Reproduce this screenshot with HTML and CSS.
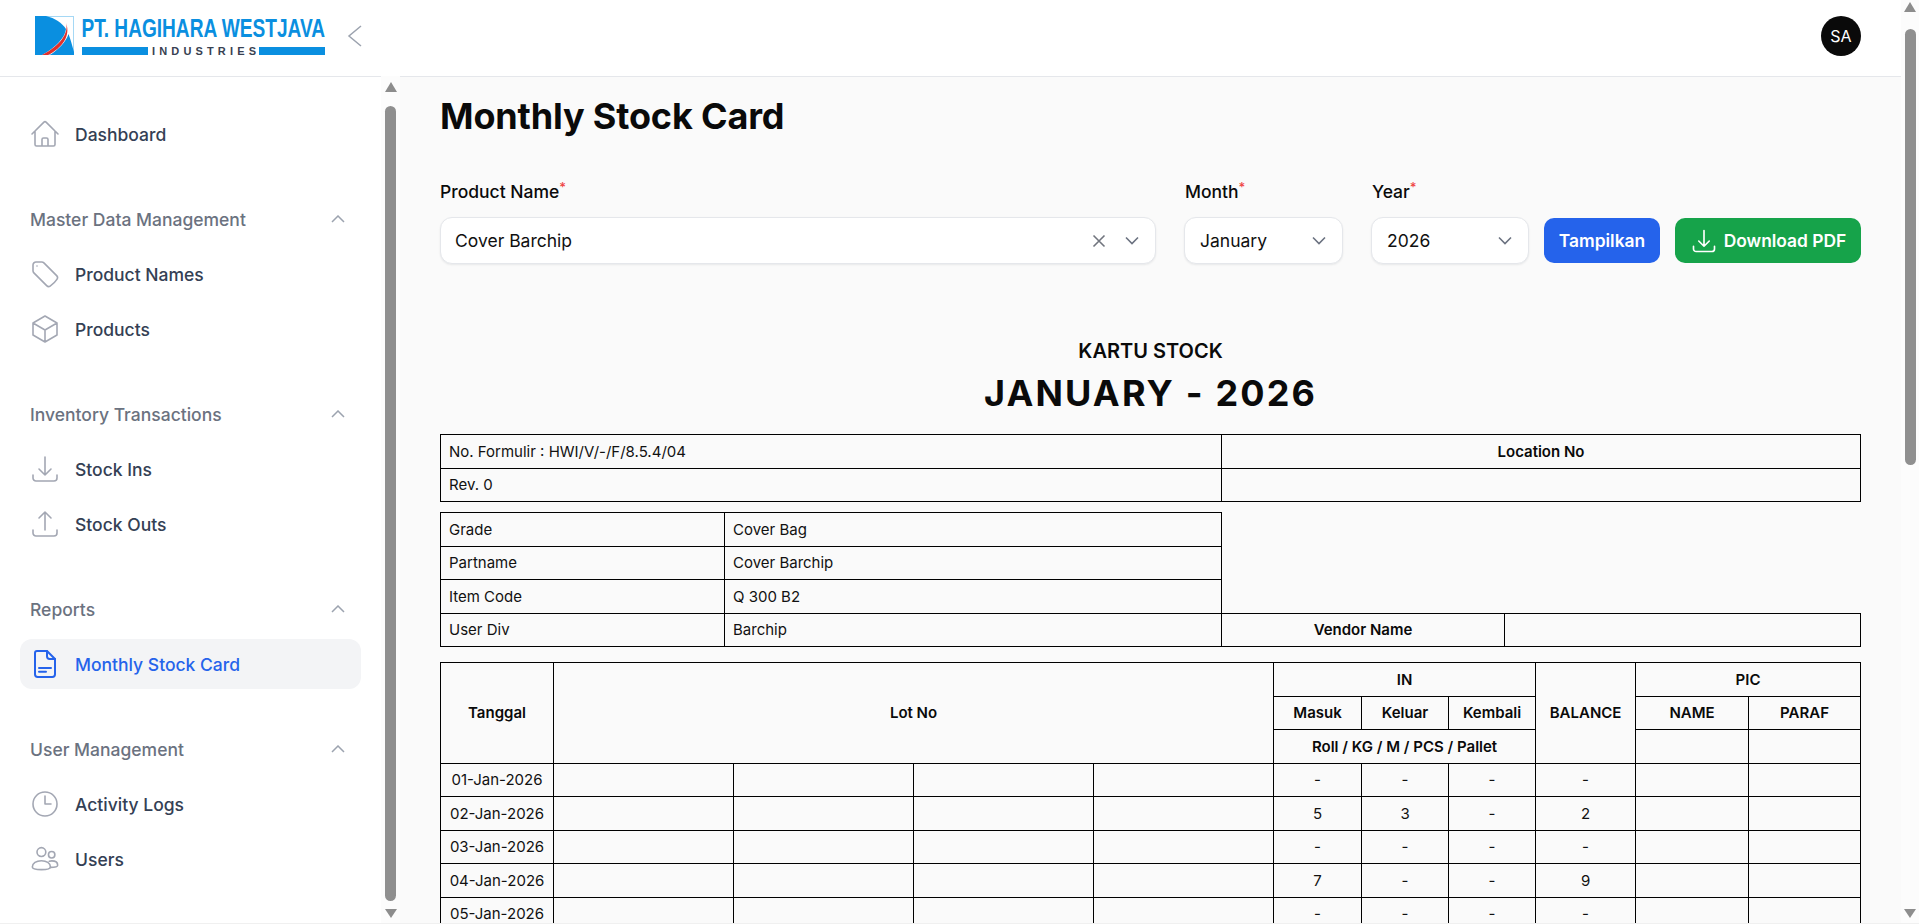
FILE: index.html
```html
<!DOCTYPE html>
<html lang="en">
<head>
<meta charset="utf-8">
<title>Monthly Stock Card</title>
<link rel="stylesheet" href="styles.css">
</head>
<body>
<div class="app">
  <div class="page">
    <header class="topbar">
      <svg class="logo" viewBox="0 0 291 40" width="291" height="40" role="img" aria-label="PT. Hagihara Westjava Industries">
        <rect class="logo-frame" x="0.5" y="0.5" width="38" height="38"/>
        <path class="logo-blue" d="M0 0H11C20 2 27 7 31 13C30 22 20 32 7 39H0Z"/>
        <path class="logo-red" d="M31 7C34 17 25 30 7 39H13C27 32 36 20 31 7Z"/>
        <path class="logo-blue" d="M33.5 18C31 26 24 33 15 39H39V36C37 29 35.500 23 33.500 18Z"/>
        <text class="logo-name" x="46.500" y="21" textLength="243.500" lengthAdjust="spacingAndGlyphs">PT. HAGIHARA WESTJAVA</text>
        <rect class="logo-blue" x="47" y="31" width="66" height="8"/>
        <text class="logo-sub" x="117" y="39" textLength="104">INDUSTRIES</text>
        <rect class="logo-blue" x="224" y="31" width="66" height="8"/>
      </svg>
      <svg class="collapse" viewBox="0 0 24 24" width="24" height="24"><path d="M18 2L6 12L18 22"/></svg>
      <div class="avatar">SA</div>
    </header>
    <div class="workspace">
      <aside class="sidebar">
        <nav class="nav">
          <a class="item single"><svg class="ico" viewBox="0 0 24 24"><path d="M2.250 12l8.954-8.955c.44-.439 1.152-.439 1.591 0L21.750 12M4.500 9.750v10.125c0 .621.504 1.125 1.125 1.125H9.750v-4.875c0-.621.504-1.125 1.125-1.125h2.250c.621 0 1.125.504 1.125 1.125V21h4.125c.621 0 1.125-.504 1.125-1.125V9.750M8.250 21h8.250"/></svg>Dashboard</a>

          <section class="group">
            <div class="group-title">Master Data Management<svg class="caret" viewBox="0 0 14 8"><path d="M1 7L7 1L13 7"/></svg></div>
            <a class="item"><svg class="ico" viewBox="0 0 24 24"><path d="M9.568 3H5.250A2.250 2.250 0 003 5.250v4.318c0 .597.237 1.170.659 1.591l9.581 9.581c.699.699 1.780.872 2.607.33a18.095 18.095 0 005.223-5.223c.542-.827.369-1.908-.33-2.607L11.160 3.660A2.250 2.250 0 009.568 3z"/><path d="M6 6h.008v.008H6V6z"/></svg>Product Names</a>
            <a class="item"><svg class="ico" viewBox="0 0 24 24"><path d="M21 7.500l-9-5.250L3 7.500m18 0l-9 5.250m9-5.250v9l-9 5.250M3 7.500l9 5.250M3 7.500v9l9 5.250m0-9v9"/></svg>Products</a>
          </section>

          <section class="group">
            <div class="group-title">Inventory Transactions<svg class="caret" viewBox="0 0 14 8"><path d="M1 7L7 1L13 7"/></svg></div>
            <a class="item"><svg class="ico" viewBox="0 0 24 24"><path d="M3 16.500v2.250A2.250 2.250 0 005.250 21h13.500A2.250 2.250 0 0021 18.750V16.500M16.500 12L12 16.500m0 0L7.500 12m4.500 4.500V3"/></svg>Stock Ins</a>
            <a class="item"><svg class="ico" viewBox="0 0 24 24"><path d="M3 16.500v2.250A2.250 2.250 0 005.250 21h13.500A2.250 2.250 0 0021 18.750V16.500m-13.500-9L12 3m0 0l4.500 4.500M12 3v13.500"/></svg>Stock Outs</a>
          </section>

          <section class="group">
            <div class="group-title">Reports<svg class="caret" viewBox="0 0 14 8"><path d="M1 7L7 1L13 7"/></svg></div>
            <a class="item active"><svg class="ico" viewBox="0 0 24 24"><path d="M6 2.250h7.500l6 6v11.500a2 2 0 0 1-2 2H6.500a2 2 0 0 1-2-2V3.750a1.500 1.500 0 0 1 1.500-1.500z"/><path d="M13.500 2.250v4a2 2 0 0 0 2 2h4M7.500 15h9M7.500 17.800h5.250"/></svg>Monthly Stock Card</a>
          </section>

          <section class="group">
            <div class="group-title">User Management<svg class="caret" viewBox="0 0 14 8"><path d="M1 7L7 1L13 7"/></svg></div>
            <a class="item"><svg class="ico" viewBox="0 0 24 24"><path d="M12 6v6h4.500m4.500 0a9 9 0 11-18 0 9 9 0 0118 0z"/></svg>Activity Logs</a>
            <a class="item"><svg class="ico" viewBox="0 0 24 24"><circle cx="9.300" cy="6.800" r="3.300"/><circle cx="17" cy="8.800" r="2.400"/><path d="M2.500 18c0-2.900 3-4.700 6.800-4.700s6.800 1.800 6.800 4.700c0 1.300-2 2-6.800 2s-6.800-.7-6.800-2z"/><path d="M15.200 13.700c.6-.2 1.200-.3 1.900-.3 2.600 0 4.400 1.300 4.400 3.200 0 1.300-1.500 1.700-5.500 1.700"/></svg>Users</a>
          </section>
        </nav>
        <div class="vbar vbar-side">
          <span class="arrow-up"></span>
          <span class="thumb thumb-side"></span>
          <span class="arrow-down"></span>
        </div>
      </aside>

      <main class="main">
        <h1 class="title">Monthly Stock Card</h1>

        <form class="filters">
          <div class="field field-product">
            <label class="label">Product Name<sup class="req">*</sup></label>
            <div class="select">
              <span class="select-value">Cover Barchip</span>
              <svg class="clear" viewBox="0 0 14 14"><path d="M1.500 1.500L12.500 12.500M12.500 1.500L1.500 12.500"/></svg>
              <svg class="chev" viewBox="0 0 14 9"><path d="M1 1.500L7 7.500L13 1.500"/></svg>
            </div>
          </div>
          <div class="field field-month">
            <label class="label">Month<sup class="req">*</sup></label>
            <div class="select">
              <span class="select-value">January</span>
              <svg class="chev" viewBox="0 0 14 9"><path d="M1 1.500L7 7.500L13 1.500"/></svg>
            </div>
          </div>
          <div class="field field-year">
            <label class="label">Year<sup class="req">*</sup></label>
            <div class="select">
              <span class="select-value">2026</span>
              <svg class="chev" viewBox="0 0 14 9"><path d="M1 1.500L7 7.500L13 1.500"/></svg>
            </div>
          </div>
          <button type="button" class="btn btn-blue">Tampilkan</button>
          <button type="button" class="btn btn-green"><svg class="btn-ico" viewBox="0 0 24 24"><path d="M3 16.500v2.250A2.250 2.250 0 005.250 21h13.500A2.250 2.250 0 0021 18.750V16.500M16.500 12L12 16.500m0 0L7.500 12m4.500 4.500V3"/></svg>Download PDF</button>
        </form>

        <section class="report">
          <h2 class="report-kicker">KARTU STOCK</h2>
          <h3 class="report-period">JANUARY - 2026</h3>

          <table class="sheet sheet-a">
            <colgroup><col class="a1"><col class="a2"></colgroup>
            <tr><td>No. Formulir : HWI/V/-/F/8.5.4/04</td><th>Location No</th></tr>
            <tr><td>Rev. 0</td><td></td></tr>
          </table>

          <table class="sheet sheet-b">
            <colgroup><col class="b1"><col class="b2"><col class="b3"><col class="b4"></colgroup>
            <tr><td>Grade</td><td>Cover Bag</td><td class="blank" colspan="2" rowspan="3"></td></tr>
            <tr><td>Partname</td><td>Cover Barchip</td></tr>
            <tr><td>Item Code</td><td>Q 300 B2</td></tr>
            <tr><td>User Div</td><td>Barchip</td><th>Vendor Name</th><td></td></tr>
          </table>

          <table class="sheet sheet-c">
            <colgroup><col class="c1"><col class="c2"><col class="c2"><col class="c2"><col class="c2"><col class="c3"><col class="c4"><col class="c5"><col class="c6"><col class="c7"><col class="c8"></colgroup>
            <tr><th rowspan="3">Tanggal</th><th rowspan="3" colspan="4">Lot No</th><th colspan="3">IN</th><th rowspan="3">BALANCE</th><th colspan="2">PIC</th></tr>
            <tr><th>Masuk</th><th>Keluar</th><th>Kembali</th><th>NAME</th><th>PARAF</th></tr>
            <tr><th colspan="3">Roll / KG / M / PCS / Pallet</th><td></td><td></td></tr>
            <tr class="data"><td>01-Jan-2026</td><td></td><td></td><td></td><td></td><td>-</td><td>-</td><td>-</td><td>-</td><td></td><td></td></tr>
            <tr class="data"><td>02-Jan-2026</td><td></td><td></td><td></td><td></td><td>5</td><td>3</td><td>-</td><td>2</td><td></td><td></td></tr>
            <tr class="data"><td>03-Jan-2026</td><td></td><td></td><td></td><td></td><td>-</td><td>-</td><td>-</td><td>-</td><td></td><td></td></tr>
            <tr class="data"><td>04-Jan-2026</td><td></td><td></td><td></td><td></td><td>7</td><td>-</td><td>-</td><td>9</td><td></td><td></td></tr>
            <tr class="data"><td>05-Jan-2026</td><td></td><td></td><td></td><td></td><td>-</td><td>-</td><td>-</td><td>-</td><td></td><td></td></tr>
          </table>
        </section>
      </main>
    </div>
  </div>
  <div class="vbar vbar-page">
    <span class="arrow-up"></span>
    <span class="thumb thumb-page"></span>
    <span class="arrow-down"></span>
  </div>
</div>
</body>
</html>
```
FILE: styles.css
```css
* { box-sizing: border-box; }

html, body {
  margin: 0;
  height: 924px;
  overflow: hidden;
}

body {
  font-family: Inter, "Liberation Sans", sans-serif;
  font-size: 17.500px;
  color: #101828;
  background: #fafafa;
}

.app {
  display: flex;
  height: 924px;
  border-bottom: 1px solid #f0f0f0;
}

.page {
  flex: 1;
  min-width: 0;
  display: flex;
  flex-direction: column;
}

/* Top bar */
.topbar {
  height: 77px;
  flex: none;
  display: flex;
  align-items: center;
  padding: 0 40px 4px 35px;
  background: #fff;
  border-bottom: 1px solid #e5e7eb;
}

.logo { flex: none; display: block; overflow: visible; }
.logo-frame { fill: #fff; stroke: #a5d8f5; stroke-width: 1; }
.logo-blue { fill: #0a8fe0; }
.logo-red { fill: #e0302c; }
.logo-name {
  font-family: "Liberation Sans", sans-serif;
  font-weight: 700;
  font-size: 26px;
  fill: #0a8fe0;
}
.logo-sub {
  font-family: "Liberation Sans", sans-serif;
  font-weight: 700;
  font-size: 11px;
  fill: #374151;
}

.collapse {
  margin-left: 17px;
  fill: none;
  stroke: #9ca3af;
  stroke-width: 1.500;
}

.avatar {
  margin-left: auto;
  width: 40px;
  height: 40px;
  border-radius: 50%;
  background: #0a0a0a;
  color: #fff;
  font-size: 16px;
  display: flex;
  align-items: center;
  justify-content: center;
}

.workspace {
  flex: 1;
  min-height: 0;
  display: flex;
}

/* Sidebar */
.sidebar {
  width: 400px;
  flex: none;
  display: flex;
  background: #fff;
}

.nav {
  flex: 1;
  min-width: 0;
  padding: 32px 20px 0;
}

.item {
  height: 50px;
  display: flex;
  align-items: center;
  gap: 14px;
  padding-left: 9px;
  border-radius: 12px;
  font-weight: 500;
  color: #344054;
}

.item + .item { margin-top: 5px; }
.item.single { margin-bottom: 48px; }

.item.active {
  background: #f3f4f6;
  color: #2563eb;
}

.ico {
  width: 32px;
  height: 32px;
  flex: none;
  fill: none;
  stroke: #a3a7b3;
  stroke-width: 1.200;
  stroke-linecap: round;
  stroke-linejoin: round;
}

.active .ico {
  stroke: #2563eb;
  stroke-width: 1.500;
}

.group { margin-bottom: 48px; }

.group-title {
  height: 24px;
  margin-bottom: 18px;
  padding: 0 16px 0 10px;
  display: flex;
  align-items: center;
  justify-content: space-between;
  font-weight: 500;
  color: #6b7280;
}

.caret {
  width: 14px;
  height: 8px;
  fill: none;
  stroke: #9ca3af;
  stroke-width: 1.500;
}

/* Faux scrollbars */
.vbar {
  flex: none;
  display: flex;
  flex-direction: column;
  align-items: center;
  background: #fcfcfc;
}

.vbar-side {
  position: relative;
  width: 19px;
  margin-top: -1px;
  padding: 6px 0 5px;
}

.vbar-page {
  width: 18px;
  padding: 2px 0 5px;
}

.arrow-up, .arrow-down {
  width: 0;
  height: 0;
  flex: none;
  border-left: 6.500px solid transparent;
  border-right: 6.500px solid transparent;
}

.arrow-up { border-bottom: 10px solid #8d8d8d; }
.arrow-down { border-top: 9px solid #8d8d8d; }

.thumb {
  width: 11px;
  flex: none;
  border-radius: 6px;
  background: #8f8f8f;
}

.thumb-side {
  flex: 1;
  margin: 14px 0 8px;
}

.thumb-page {
  height: 436px;
  margin: 17px 0 auto;
}

/* Main */
.main {
  flex: 1;
  min-width: 0;
  overflow: hidden;
  padding: 19px 40px 0 40px;
}

.title {
  margin: 0;
  font-size: 36px;
  line-height: 40px;
  font-weight: 700;
  letter-spacing: -0.150px;
  color: #0a0a0a;
}

.filters {
  margin-top: 44px;
  display: flex;
  align-items: flex-end;
  gap: 15px;
}

.field { display: flex; flex-direction: column; gap: 13px; }
.field-product { flex: 1; min-width: 0; margin-right: 13px; }
.field-month { width: 159px; margin-right: 13px; }
.field-year { width: 158px; }
.field-month .label, .field-year .label { padding-left: 1px; }

.label {
  line-height: 24px;
  font-weight: 500;
  color: #0a0a0a;
}

.req {
  color: #ef4444;
  font-size: 13px;
  line-height: 0;
  vertical-align: 6px;
}

.select {
  height: 47px;
  display: flex;
  align-items: center;
  padding: 0 16px 0 15px;
  background: #fff;
  border: 1px solid #e5e7eb;
  border-radius: 12px;
  box-shadow: 0 1px 2px rgba(16, 24, 40, .08);
}

.field-product .select { padding-left: 14px; }

.select-value {
  flex: 1;
  min-width: 0;
  color: #101010;
}

.clear {
  width: 14px;
  height: 14px;
  margin-right: 19px;
  fill: none;
  stroke: #71757e;
  stroke-width: 1.600;
}

.chev {
  width: 14px;
  height: 9px;
  fill: none;
  stroke: #6b7280;
  stroke-width: 1.600;
}

.btn {
  height: 45px;
  margin-bottom: 1px;
  border: 0;
  border-radius: 10px;
  color: #fff;
  font: 600 17.400px/24px Inter, "Liberation Sans", sans-serif;
  display: flex;
  align-items: center;
  justify-content: center;
  padding: 0;
}

.btn-blue { width: 116px; background: #2563eb; }
.btn-green { width: 186px; background: #16a34a; gap: 6px; }

.btn-ico {
  width: 28px;
  height: 28px;
  fill: none;
  stroke: #fff;
  stroke-width: 1.400;
  stroke-linecap: round;
  stroke-linejoin: round;
}

/* Report */
.report { margin-top: 73px; }

.report-kicker {
  margin: 0;
  font-size: 20px;
  line-height: 28px;
  font-weight: 600;
  text-align: center;
  color: #0a0a0a;
}

.report-period {
  margin: 8px 0 21px;
  font-size: 36px;
  line-height: 40px;
  font-weight: 700;
  letter-spacing: 2.150px;
  text-align: center;
  color: #0a0a0a;
}

.sheet {
  width: 1420px;
  table-layout: fixed;
  border-collapse: collapse;
  font-size: 15px;
  color: #111;
}

.sheet td, .sheet th {
  height: 33.500px;
  padding: 0 8px;
  border: 1px solid #000;
  font-weight: 400;
  overflow: hidden;
  white-space: nowrap;
}

.sheet th {
  font-weight: 600;
  text-align: center;
  color: #0a0a0a;
}

.sheet td.blank {
  border-top: 0;
  border-right: 0;
}

.sheet-b { margin-top: 10px; }
.sheet-c { margin-top: 15px; }
.sheet-c .data td { text-align: center; padding: 0 2px; }

.a1 { width: 781px; }
.a2 { width: 639px; }
.b1 { width: 284px; }
.b2 { width: 497px; }
.b3 { width: 283px; }
.b4 { width: 356px; }
.c1 { width: 113px; }
.c2 { width: 180px; }
.c3 { width: 88px; }
.c4 { width: 87px; }
.c5 { width: 87px; }
.c6 { width: 100px; }
.c7 { width: 113px; }
.c8 { width: 112px; }
```
